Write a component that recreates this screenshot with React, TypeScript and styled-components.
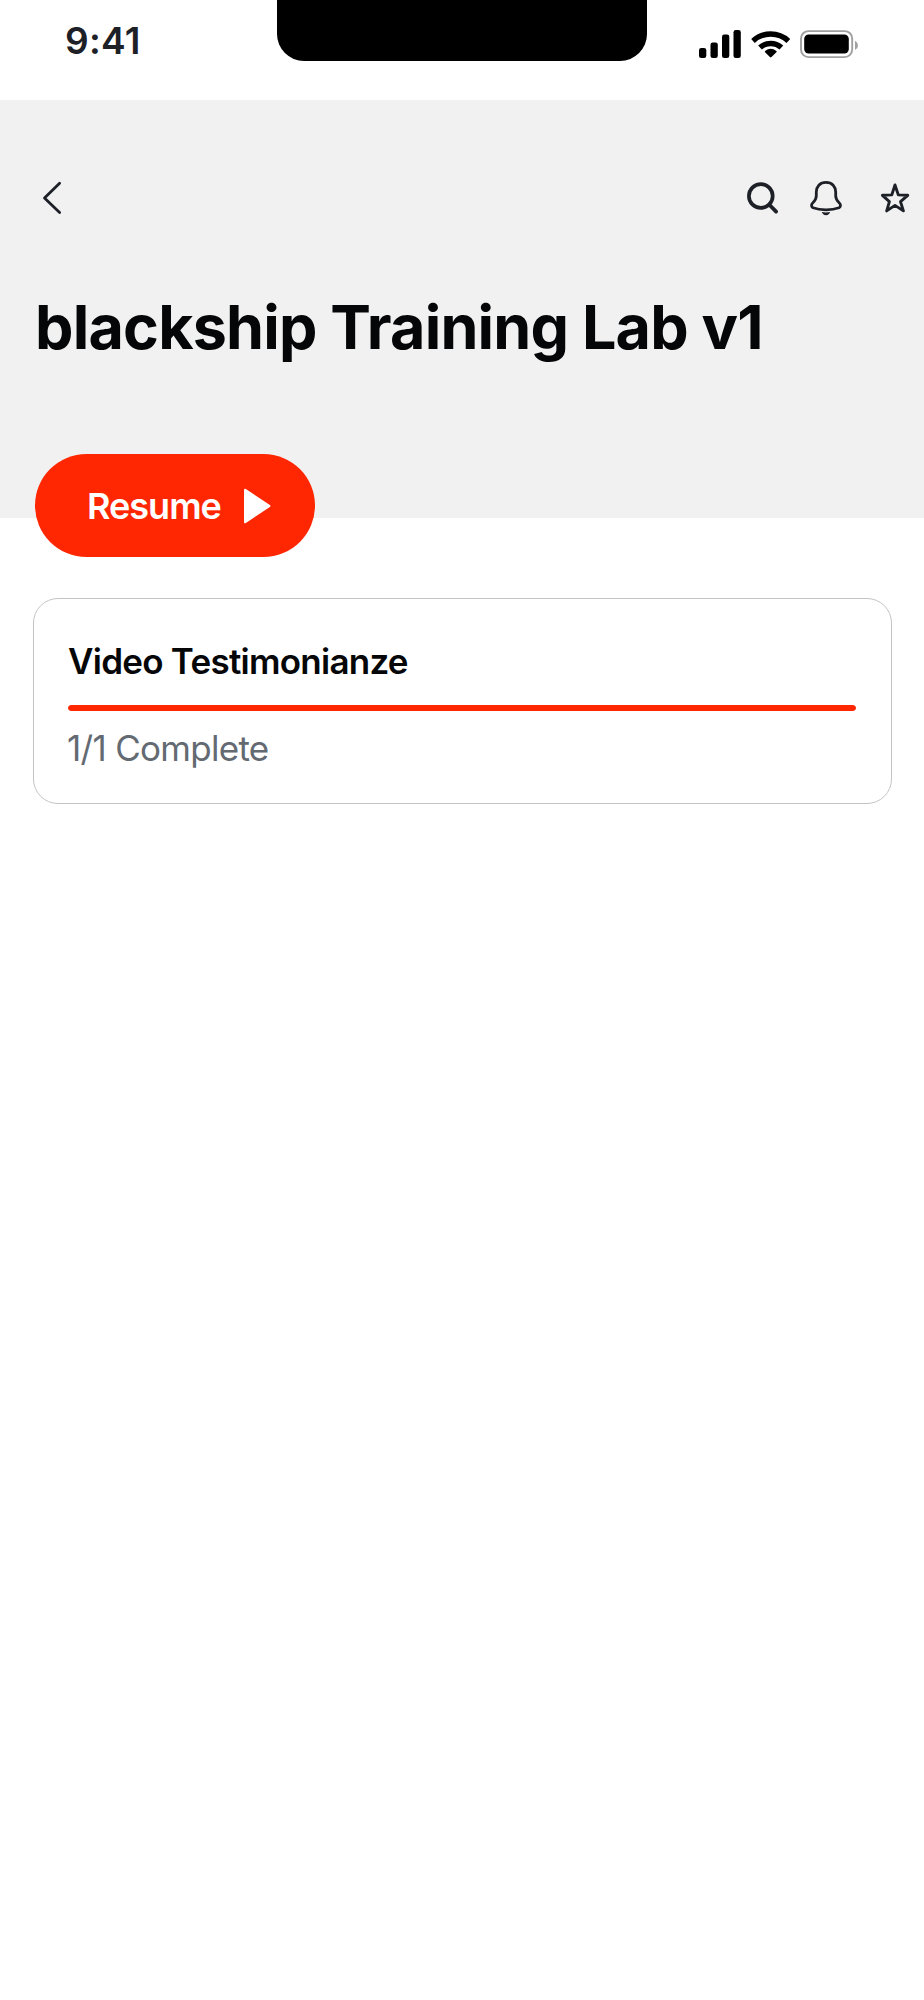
import React from 'react';
import styled, { createGlobalStyle } from 'styled-components';

const GlobalStyle = createGlobalStyle`
  *, *::before, *::after { box-sizing: border-box; }
  body {
    margin: 0;
    background: #ffffff;
    font-family: Inter, "Liberation Sans", sans-serif;
  }
`;

const Screen = styled.main`
  display: flex;
  flex-direction: column;
  width: 924px;
  height: 2000px;
  overflow: hidden;
  background: #ffffff;
`;

const StatusBar = styled.div`
  display: grid;
  grid-template-columns: 277px 370px 1fr;
  align-items: start;
  height: 100px;
  flex: none;
`;

const Time = styled.time`
  padding: 18px 0 0 65px;
  font-size: 37px;
  line-height: 45px;
  font-weight: 600;
  letter-spacing: 0.3px;
  color: #1d2127;
`;

const Notch = styled.div`
  height: 61px;
  background: #000000;
  border-radius: 0 0 27px 27px;
`;

const StatusIcons = styled.div`
  display: flex;
  padding: 30px 0 0 52px;
`;

const Header = styled.header`
  display: flex;
  flex-direction: column;
  height: 417.5px;
  flex: none;
  padding-top: 80px;
  background: #f1f1f1;
`;

const Toolbar = styled.nav`
  display: flex;
  justify-content: space-between;
  align-items: center;
  height: 36px;
  padding: 0 12px 0 40px;
`;

const Actions = styled.div`
  display: flex;
  align-items: center;
`;

const IconButton = styled.button<{ $gap?: number }>`
  display: flex;
  margin: 0 0 0 ${({ $gap = 0 }) => $gap}px;
  padding: 0;
  border: 0;
  background: none;
  color: #1d2127;
`;

const Title = styled.h1`
  margin: 73px 0 0 35px;
  font-size: 61px;
  line-height: 76px;
  font-weight: 700;
  letter-spacing: -0.79px;
  white-space: nowrap;
  color: #050608;
`;

const ResumeButton = styled.button`
  display: flex;
  align-items: center;
  gap: 22.5px;
  flex: none;
  width: 280.5px;
  height: 103px;
  margin: -63.5px 0 0 34.5px;
  padding: 1px 0 0 52.5px;
  border: 0;
  border-radius: 52px;
  background: #ff2702;
  color: #ffffff;
  font-family: inherit;
  font-size: 36px;
  font-weight: 600;
  letter-spacing: -1px;
`;

const Card = styled.section`
  display: flex;
  flex-direction: column;
  flex: none;
  width: 859px;
  height: 206px;
  margin: 41px 0 0 32.5px;
  padding: 39px 34.5px 0;
  border: 1px solid #c4c4c4;
  border-radius: 25px;
`;

const CardTitle = styled.h2`
  margin: 0;
  font-size: 35px;
  line-height: 46px;
  font-weight: 600;
  letter-spacing: -0.74px;
  color: #050608;
`;

const ProgressTrack = styled.div`
  height: 6px;
  margin-top: 21px;
  border-radius: 3px;
  background: #e4e4e4;
  overflow: hidden;
`;

const ProgressFill = styled.div<{ $value: number }>`
  width: ${({ $value }) => $value * 100}%;
  height: 100%;
  border-radius: 3px;
  background: #ff2702;
`;

const CardStatus = styled.p`
  margin: 14px 0 0 -1px;
  font-size: 35px;
  line-height: 46px;
  font-weight: 400;
  letter-spacing: -0.7px;
  color: #636a72;
`;

const StatusGlyphs = () => (
  <svg width="160" height="29" viewBox="699 30 160 29" aria-hidden="true">
    <rect x="699" y="48" width="7.3" height="10" rx="2.3" />
    <rect x="710.5" y="42.5" width="7.3" height="15.5" rx="2.3" />
    <rect x="722" y="34.5" width="7.3" height="23.5" rx="2.3" />
    <rect x="733.5" y="30" width="7.3" height="28" rx="2.3" />
    <g fill="none" stroke="#000" strokeWidth="5.4">
      <path d="M753 40.9A26 26 0 0 1 788.4 40.9" />
      <path d="M760 47.6A15.8 15.8 0 0 1 781.4 47.6" />
    </g>
    <path d="M765.1 51.1Q770.7 46.2 776.4 51.1Q777 51.7 776.4 52.3L771.5 57.1Q770.7 57.9 769.9 57.1L765.1 52.3Q764.5 51.7 765.1 51.1Z" />
    <rect x="801" y="31.1" width="51.2" height="26" rx="7.5" fill="#fff" stroke="#a0a0a0" strokeWidth="1.9" />
    <rect x="804.2" y="34.5" width="44.6" height="19" rx="4.5" />
    <path d="M855 40.8Q858 42.4 858 45.4Q858 48.4 855 50Z" fill="#a0a0a0" />
  </svg>
);

const BackIcon = () => (
  <svg width="24" height="36" viewBox="40 180 24 36" fill="none" stroke="currentColor" strokeWidth="2.8" strokeLinecap="round" strokeLinejoin="round">
    <path d="M59.6 183.3L44.5 198L59.6 212.6" />
  </svg>
);

const SearchIcon = () => (
  <svg width="32" height="36" viewBox="747 180 32 36" fill="none" stroke="currentColor" strokeWidth="3.7" strokeLinecap="round">
    <circle cx="760.8" cy="196" r="11.9" />
    <path d="M769.6 205L776.1 211.6" strokeWidth="3.8" />
  </svg>
);

const BellIcon = () => (
  <svg width="34" height="36" viewBox="809 180 34 36" fill="none" stroke="currentColor" strokeWidth="2.8" strokeLinejoin="round">
    <path d="M826 182.3C819.8 182.3 816.3 186.7 816.3 192.1V196C816.3 199.5 814.6 200.9 812.3 203.4C811.1 204.8 811.3 206.9 813 207.8C820 210.5 832 210.5 839 207.8C840.7 206.9 840.9 204.8 839.7 203.4C837.4 200.9 835.7 199.5 835.7 196V192.1C835.7 186.7 832.2 182.3 826 182.3Z" />
    <path d="M821.8 212.1Q826 212.9 830.1 212.1Q829.3 215.2 826 215.2Q822.7 215.2 821.8 212.1Z" fill="currentColor" stroke="none" />
  </svg>
);

const StarIcon = () => (
  <svg width="32" height="36" viewBox="880 180 32 36" fill="none" stroke="currentColor" strokeWidth="2.9" strokeLinejoin="round">
    <path d="M895 185L898.3 194.9L907.8 195.3L900.5 201.6L903.4 210.9L895 205.4L886.7 210.9L889.4 201.6L882.4 195.3L891.8 194.9Z" />
  </svg>
);

const PlayIcon = () => (
  <svg width="28" height="36" viewBox="244 489 28 36" fill="#fff" stroke="#fff" strokeWidth="2.4" strokeLinejoin="round" aria-hidden="true">
    <path d="M246.2 491L270.2 507L246.2 523Z" />
  </svg>
);

interface Lesson {
  name: string;
  done: number;
  total: number;
}

const lessons: Lesson[] = [{ name: 'Video Testimonianze', done: 1, total: 1 }];

export default function App() {
  return (
    <>
      <GlobalStyle />
      <Screen>
        <StatusBar>
          <Time>9:41</Time>
          <Notch />
          <StatusIcons>
            <StatusGlyphs />
          </StatusIcons>
        </StatusBar>
        <Header>
          <Toolbar>
            <IconButton aria-label="Back"><BackIcon /></IconButton>
            <Actions>
              <IconButton aria-label="Search"><SearchIcon /></IconButton>
              <IconButton aria-label="Notifications" $gap={30}><BellIcon /></IconButton>
              <IconButton aria-label="Favourite" $gap={37}><StarIcon /></IconButton>
            </Actions>
          </Toolbar>
          <Title>blackship Training Lab v1</Title>
        </Header>
        <ResumeButton>
          Resume
          <PlayIcon />
        </ResumeButton>
        {lessons.map(({ name, done, total }) => (
          <Card key={name}>
            <CardTitle>{name}</CardTitle>
            <ProgressTrack>
              <ProgressFill $value={done / total} />
            </ProgressTrack>
            <CardStatus>{`${done}/${total} Complete`}</CardStatus>
          </Card>
        ))}
      </Screen>
    </>
  );
}
